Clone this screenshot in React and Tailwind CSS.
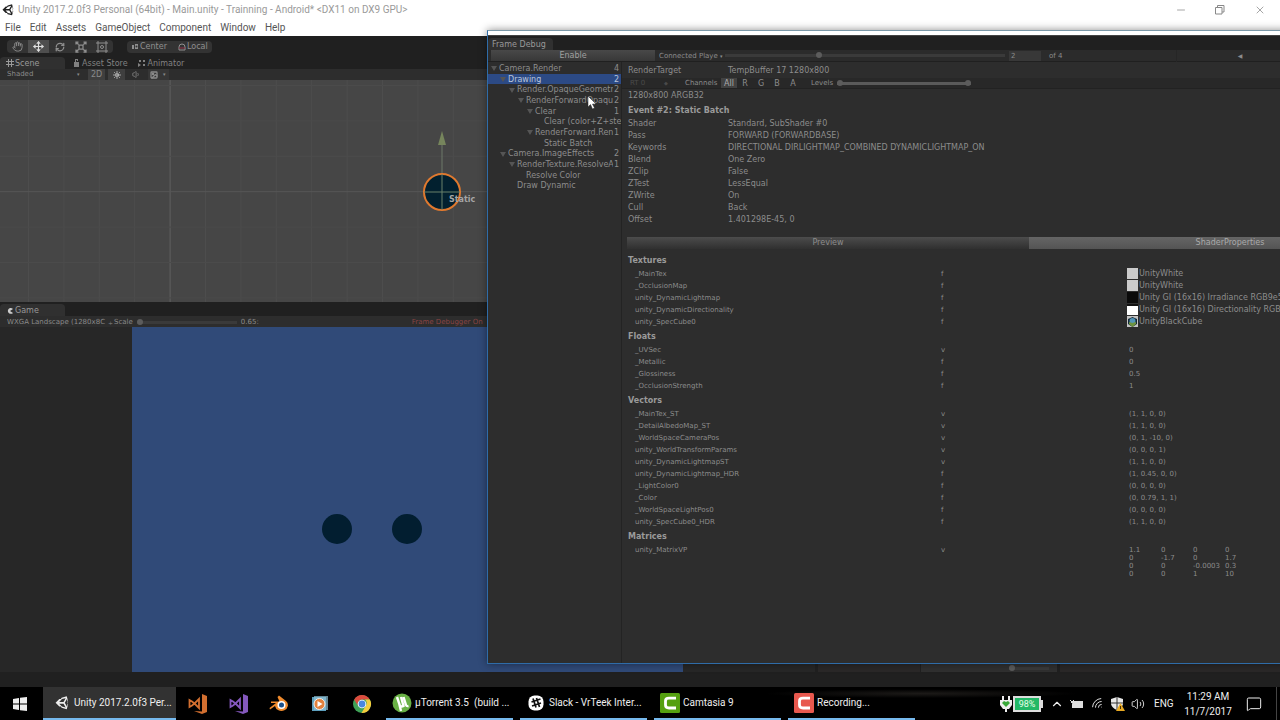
import { useState } from 'react';
import { Hand, Move, RefreshCw, Sun, Volume1, Volume2, Image, Minus, X, ChevronUp, Wifi, MessageSquare } from 'lucide-react';

const MENU = ['File', 'Edit', 'Assets', 'GameObject', 'Component', 'Window', 'Help'];

const TREE = [
  { name: 'Camera.Render', depth: 0, count: 4, open: true },
  { name: 'Drawing', depth: 1, count: 2, open: true },
  { name: 'Render.OpaqueGeometr', depth: 2, count: 2, open: true },
  { name: 'RenderForwardOpaqu', depth: 3, count: 2, open: true },
  { name: 'Clear', depth: 4, count: 1, open: true },
  { name: 'Clear (color+Z+ste', depth: 5 },
  { name: 'RenderForward.Ren', depth: 4, count: 1, open: true },
  { name: 'Static Batch', depth: 5 },
  { name: 'Camera.ImageEffects', depth: 1, count: 2, open: true },
  { name: 'RenderTexture.ResolveA', depth: 2, count: 1, open: true },
  { name: 'Resolve Color', depth: 3 },
  { name: 'Draw Dynamic', depth: 2 },
];

const STATE = [
  ['Shader', 'Standard, SubShader #0'],
  ['Pass', 'FORWARD (FORWARDBASE)'],
  ['Keywords', 'DIRECTIONAL DIRLIGHTMAP_COMBINED DYNAMICLIGHTMAP_ON'],
  ['Blend', 'One Zero'],
  ['ZClip', 'False'],
  ['ZTest', 'LessEqual'],
  ['ZWrite', 'On'],
  ['Cull', 'Back'],
  ['Offset', '1.401298E-45, 0'],
];

const TEXTURES = [
  ['_MainTex', 'f', 'UnityWhite', 'white'],
  ['_OcclusionMap', 'f', 'UnityWhite', 'white'],
  ['unity_DynamicLightmap', 'f', 'Unity GI (16x16) Irradiance RGB9e5', 'black'],
  ['unity_DynamicDirectionality', 'f', 'Unity GI (16x16) Directionality RGBM', 'half'],
  ['unity_SpecCube0', 'f', 'UnityBlackCube', 'cube'],
];

const FLOATS = [
  ['_UVSec', 'v', '0'],
  ['_Metallic', 'f', '0'],
  ['_Glossiness', 'f', '0.5'],
  ['_OcclusionStrength', 'f', '1'],
];

const VECTORS = [
  ['_MainTex_ST', 'v', '(1, 1, 0, 0)'],
  ['_DetailAlbedoMap_ST', 'v', '(1, 1, 0, 0)'],
  ['_WorldSpaceCameraPos', 'v', '(0, 1, -10, 0)'],
  ['unity_WorldTransformParams', 'v', '(0, 0, 0, 1)'],
  ['unity_DynamicLightmapST', 'v', '(1, 1, 0, 0)'],
  ['unity_DynamicLightmap_HDR', 'f', '(1, 0.45, 0, 0)'],
  ['_LightColor0', 'f', '(0, 0, 0, 0)'],
  ['_Color', 'f', '(0, 0.79, 1, 1)'],
  ['_WorldSpaceLightPos0', 'f', '(0, 0, 0, 0)'],
  ['unity_SpecCube0_HDR', 'f', '(1, 1, 0, 0)'],
];

const MATRIX = ['1.1', '0', '0', '0', '0', '-1.7', '0', '1.7', '0', '0', '-0.0003', '0.3', '0', '0', '1', '10'];

const RANGE = 'block appearance-none bg-transparent h-2 m-0 outline-none [&::-webkit-slider-runnable-track]:h-[3px] [&::-webkit-slider-runnable-track]:bg-[#3a3a3a] [&::-webkit-slider-thumb]:appearance-none [&::-webkit-slider-thumb]:size-[6px] [&::-webkit-slider-thumb]:-mt-[2px] [&::-webkit-slider-thumb]:rounded-full [&::-webkit-slider-thumb]:bg-[#5c5c5c]';

function UnityLogo({ className }) {
  return (
    <svg viewBox="0 0 24 24" className={className}>
      <path fill="currentColor" fillRule="evenodd" d="M22.5 9.2 20.1.6l-8.8 2.3-1.3 2.3H7.4L1 11.6 7.4 18H10l1.3 2.3 8.8 2.3 2.4-8.6-1.4-2.4zM11.9 5.3l6.4-1.6-3.7 6.4H7.2zM7.2 13.1h7.4l3.7 6.4-6.4-1.6zM16.8 11.6l3.7-6.4 1.7 6.4-1.7 6.4z" />
    </svg>
  );
}

function TitleBar() {
  return (
    <header className="h-5 pl-0.5 flex items-center bg-white text-[#9a9a9a] font-['Roboto',sans-serif]">
      <UnityLogo className="w-3 h-3 text-[#222]" />
      <h1 className="ml-1 text-[10px] leading-5 whitespace-nowrap">Unity 2017.2.0f3 Personal (64bit) - Main.unity - Trainning - Android* &lt;DX11 on DX9 GPU&gt;</h1>
      <div className="ml-auto flex text-[#888]">
        <button aria-label="Minimize" className="w-10 flex justify-center"><Minus className="w-3 h-3" strokeWidth={1.5} /></button>
        <button aria-label="Restore" className="w-[38px] flex justify-center">
          <svg viewBox="0 0 12 12" className="w-3 h-3" fill="none" stroke="currentColor"><path d="M1.5 3.5h6.5v6.5H1.5zM3.5 3.5v-2h6.500v6.500H8" /></svg>
        </button>
        <button aria-label="Close" className="w-[41px] flex justify-center"><X className="w-3 h-3" strokeWidth={1.5} /></button>
      </div>
    </header>
  );
}

function MenuBar() {
  return (
    <nav className="h-4 pl-[5px] flex items-center gap-[9px] bg-white text-[10px] leading-4 text-[#555] font-['Roboto',sans-serif]">
      {MENU.map((m) => <button key={m}>{m}</button>)}
    </nav>
  );
}

function Toolbar() {
  const tool = 'w-[21px] h-full flex items-center justify-center';
  return (
    <div className="h-[21px] pl-[7px] flex items-center gap-[14px] bg-[#202020] text-[#8f8f8f]">
      <div className="flex h-[13px] rounded-sm overflow-hidden bg-[#333]">
        <button aria-label="Hand" className={tool}><Hand className="w-[11px] h-[11px]" /></button>
        <button aria-label="Move" className={`${tool} bg-[#4e4e4e] text-[#ddd]`}><Move className="w-[11px] h-[11px]" strokeWidth={2.5} /></button>
        <button aria-label="Rotate" className={tool}><RefreshCw className="w-[10px] h-[10px]" strokeWidth={3} /></button>
        <button aria-label="Scale" className={tool}>
          <svg viewBox="0 0 24 24" className="w-3 h-3" fill="none" stroke="currentColor" strokeWidth="2.5"><path d="M8 8h8v8H8zM7 7 2 2M17 7l5-5M7 17l-5 5M17 17l5 5M2 7V2h5M17 2h5v5M2 17v5h5M17 22h5v-5" /></svg>
        </button>
        <button aria-label="Rect" className={`${tool} w-[22px]`}>
          <svg viewBox="0 0 24 24" className="w-3 h-3" fill="none" stroke="currentColor" strokeWidth="2"><path d="M4 4h16v16H4zM4 0v4H0M20 0v4h4M4 24v-4H0M20 24v-4h4" /><circle cx="12" cy="12" r="3" /></svg>
        </button>
      </div>
      <div className="flex h-3 rounded-sm overflow-hidden bg-[#333] text-[8px] leading-3">
        <button className="w-[43px] pl-1 flex items-center gap-[1px]">
          <svg viewBox="0 0 8 6" className="w-2 h-1.5" fill="currentColor"><path d="M1 1h2v4H1zM4 0h3v5H4z" /><circle cx="5.500" cy="2.500" r="1" fill="#333" /></svg>
          Center
        </button>
        <button className="w-[42px] pl-2 flex items-center gap-[1px]">
          <svg viewBox="0 0 8 8" className="w-2 h-2" fill="none"><path d="M1 4a3 3 0 0 1 6 0v3H1z" stroke="#8f8f8f" /><path d="M1 5h6" stroke="#963048" /></svg>
          Local
        </button>
      </div>
    </div>
  );
}

function SceneGrid() {
  const xs = Array.from({ length: 24 }, (_, i) => 28.5 + i * 35.4);
  const ys = Array.from({ length: 7 }, (_, i) => 5.5 + i * 35.4);
  return (
    <svg className="block w-full h-full bg-[#464646]" aria-label="Scene view">
      {xs.map((x, i) => <line key={x} x1={x} x2={x} y1="0" y2="100%" stroke={i === 4 ? '#606060' : '#4d4d4d'} />)}
      {ys.map((y, i) => <line key={y} x1="0" x2="100%" y1={y} y2={y} stroke={i === 3 ? '#575757' : '#4b4b4b'} />)}
      <path d="M442 64v48" stroke="#6c7868" />
      <path d="M442 51l4 14h-8z" fill="#76855c" />
      <circle cx="442" cy="112" r="18" fill="#02202f" stroke="#e0792e" strokeWidth="2" />
      <path d="M442 94v36M424 112h36" stroke="#68806a" />
      <text x="449" y="122" fontSize="8" fontWeight="bold" fill="#a5a5a5">Static</text>
    </svg>
  );
}

function ScenePanel() {
  return (
    <section className="flex flex-col h-[245px]">
      <div className="h-3 flex bg-[#202020] text-[8px] leading-[13px] text-[#808080]">
        <button className="w-[65px] pl-1.5 flex items-center gap-[1px] rounded-t-sm bg-[#303030] text-[#999]">
          <svg viewBox="0 0 8 8" className="w-2 h-2" stroke="currentColor"><path d="M2.500 0v8M5.500 0v8M0 2.500h8M0 5.500h8" /></svg>
          Scene
        </button>
        <button className="ml-2 flex items-center gap-[1px]">
          <svg viewBox="0 0 8 8" className="w-2 h-2" fill="currentColor"><path d="M1 3h5v5H1zM2 0h3v2H4V1H3v2H2z" /></svg>
          Asset Store
        </button>
        <button className="ml-[10px] flex items-center gap-0.5">
          <svg viewBox="0 0 8 8" className="w-2 h-2" fill="currentColor"><path d="M0 4l3 2-3 2zM1 1h2v2H1zM5 1h2v2H5zM5 5h2v2H5z" /></svg>
          Animator
        </button>
      </div>
      <div className="h-[11px] pl-[7px] flex items-center gap-[3px] bg-[#2d2d2d] text-[7px] leading-[11px] text-[#8a8a8a]">
        <select aria-label="Draw mode" className="w-[67px] appearance-none bg-transparent"><option>Shaded</option></select>
        <span className="w-2 text-[5px]">▾</span>
        <button className="w-[17px] bg-[#3f3f3f] text-[8px]">2D</button>
        <button aria-label="Lighting" className="w-[17px] h-full flex items-center justify-center bg-[#3f3f3f] text-[#ccc]"><Sun className="w-2 h-2" strokeWidth={3} /></button>
        <button aria-label="Audio" className="w-[17px] flex justify-center"><Volume1 className="w-[9px] h-[9px]" /></button>
        <button aria-label="Effects" className="w-[21px] h-full flex items-center gap-1 pl-[1px] bg-[#363636]"><Image className="w-2.5 h-2" strokeWidth={4} /><span className="text-[5px]">▾</span></button>
      </div>
      <div className="flex-1 min-h-0"><SceneGrid /></div>
    </section>
  );
}

function GamePanel() {
  return (
    <section className="flex flex-col flex-1">
      <div className="h-[14px] pt-0.5 flex bg-[#202020] text-[8px] leading-3 text-[#999]">
        <button className="w-[65px] pl-1.5 pt-[1px] flex items-center gap-[1px] rounded-t-sm bg-[#303030]">
          <svg viewBox="0 0 8 8" className="w-2 h-2" fill="#ccc"><path d="M4 1a3 3 0 1 0 3 5L4 4l3-2a3 3 0 0 0-3-1z" /></svg>
          Game
        </button>
      </div>
      <div className="h-[11px] pl-[7px] pt-[1px] flex items-center bg-[#2d2d2d] text-[7px] leading-[11px] text-[#8a8a8a]">
        <select aria-label="Aspect" className="w-[101px] appearance-none bg-transparent overflow-hidden text-clip"><option>WXGA Landscape (1280x8C</option></select>
        <span className="w-[6px] text-[6px]">÷</span>
        <label htmlFor="scale">Scale</label>
        <input id="scale" type="range" min="0" max="100" defaultValue="0" className={`w-[100px] ml-1 ${RANGE}`} />
        <span className="ml-1">0.65:</span>
        <span className="ml-[153px] text-[#8a4444]">Frame Debugger On</span>
      </div>
      <div className="flex-1 flex justify-center bg-[#272727]">
        <svg viewBox="0 0 551 345" className="w-[551px] h-full bg-[#304a78]" aria-label="Game view">
          <circle cx="205" cy="202" r="15" fill="#021e30" />
          <circle cx="275" cy="202" r="15" fill="#021e30" />
        </svg>
      </div>
    </section>
  );
}

function EventTree() {
  const [selected, setSelected] = useState(1);
  return (
    <div role="tree" className="w-[134px] shrink-0 pt-[1px] border-r border-[#232323]">
      <div className="h-32 flex flex-col text-[8px] leading-[11px] text-[#8c8c8c]">
        {TREE.map((n, i) => (
          <div key={i} role="treeitem" aria-selected={i === selected} onClick={() => setSelected(i)}
            className={`flex-1 min-h-0 flex items-center ${i === selected ? 'bg-[#2c4a85] text-[#b8c4dc]' : ''}`}
            style={{ paddingLeft: 3 + n.depth * 9 }}>
            <svg viewBox="0 0 6 6" className="w-1.5 h-1.5 mr-0.5 shrink-0" fill={n.open ? '#555' : 'none'}><path d="M0 1h6L3 6z" /></svg>
            <span className="flex-1 overflow-hidden whitespace-nowrap">{n.name}</span>
            {n.count && <span className="w-[6px] mr-0.5 shrink-0 text-right">{n.count}</span>}
          </div>
        ))}
      </div>
    </div>
  );
}

const SWATCH = {
  white: 'bg-[#cbcbcb]',
  black: 'bg-[#0a0a0a]',
  half: 'bg-white border-t-2 border-[#111]',
  cube: 'bg-[#c4c4c4]',
};

function Swatch({ kind }) {
  return (
    <span className={`w-[11px] h-[11px] shrink-0 ${SWATCH[kind]}`}>
      {kind === 'cube' && (
        <svg viewBox="0 0 11 11" className="block w-full h-full">
          <path d="M1 3l4.500-2L10 3v5l-4.500 3L1 8z" fill="#142a38" />
          <circle cx="5.500" cy="5" r="3" fill="#5295b8" />
          <path d="M2 6l3.500 1L9 6v2l-3.500 3L2 8z" fill="#6f9440" />
        </svg>
      )}
    </span>
  );
}

function PropTable({ title, rows }) {
  return (
    <section>
      <h3 className="h-4 pt-[3px] text-[8px] leading-3 font-bold text-[#9a9a9a]">{title}</h3>
      <table className="w-full table-fixed border-collapse text-[7px] leading-3">
        <tbody>
          {rows.map(([name, stage, value, swatch]) => (
            <tr key={name}>
              <td className="w-[313px] h-3 p-0 pl-[7px]">{name}</td>
              <td className="w-[186px] h-3 p-0">{stage}</td>
              <td className="h-3 p-0">
                {swatch
                  ? <span className="h-3 flex gap-[1px] text-[8px] whitespace-nowrap"><Swatch kind={swatch} />{value}</span>
                  : <span className="pl-0.5">{value}</span>}
              </td>
            </tr>
          ))}
        </tbody>
      </table>
    </section>
  );
}

function EventDetails() {
  const [tab, setTab] = useState('ShaderProperties');
  const [channel, setChannel] = useState('All');
  return (
    <div className="flex-1 min-w-0 text-[8px] leading-3 text-[#8c8c8c]">
      <div className="h-4 pl-1.5 pt-[3px] flex"><span className="w-[100px]">RenderTarget</span><span>TempBuffer 17 1280x800</span></div>
      <div className="h-[11px] pl-1 flex items-center bg-[#282828] border-b border-[#222] text-[7px] leading-[11px]">
        <select aria-label="Render target" disabled className="w-[38px] pl-1 appearance-none bg-transparent text-[#4a4a4a] opacity-100"><option>RT 0</option></select>
        <span className="w-[21px] text-[5px] text-[#4a4a4a]">◆</span>
        <span className="w-9">Channels</span>
        {['All', 'R', 'G', 'B', 'A'].map((c) => (
          <button key={c} onClick={() => setChannel(c)} className={`w-4 h-full text-[8px] ${c === channel ? 'bg-[#424242] text-[#aaa]' : ''}`}>{c}</button>
        ))}
        <span className="ml-[10px] mr-1">Levels</span>
        <div className="grid w-[134px]">
          <input type="range" aria-label="Black level" min="0" max="100" defaultValue="0" className={`col-start-1 row-start-1 w-full ${RANGE} [&::-webkit-slider-runnable-track]:bg-[#5a5a5a]`} />
          <input type="range" aria-label="White level" min="0" max="100" defaultValue="100" className={`col-start-1 row-start-1 w-full ${RANGE} [&::-webkit-slider-runnable-track]:bg-transparent`} />
        </div>
      </div>
      <p className="pl-1.5 pt-[1px]">1280x800 ARGB32</p>
      <h2 className="pl-1.5 mt-[3px] h-[13px] font-bold text-[#9a9a9a]">Event #2: Static Batch</h2>
      <dl className="pl-1.5">
        {STATE.map(([k, v]) => (
          <div key={k} className="flex h-3"><dt className="w-[100px]">{k}</dt><dd>{v}</dd></div>
        ))}
      </dl>
      <div className="mt-[11px] ml-[5px] flex leading-3">
        {['Preview', 'ShaderProperties'].map((t) => (
          <button key={t} onClick={() => setTab(t)}
            className={`flex-1 h-3 bg-linear-to-b ${t === tab ? 'from-[#656565] to-[#545454] text-[#aaa]' : 'from-[#4c4c4c] to-[#303030]'}`}>{t}</button>
        ))}
      </div>
      <div className="pl-1.5 pt-[3px]">
        <PropTable title="Textures" rows={TEXTURES} />
        <PropTable title="Floats" rows={FLOATS} />
        <PropTable title="Vectors" rows={VECTORS} />
        <section>
          <h3 className="h-4 pt-[3px] font-bold text-[#9a9a9a]">Matrices</h3>
          <div className="flex pl-[7px] text-[7px]">
            <span className="w-[306px]">unity_MatrixVP</span>
            <span className="w-[188px]">v</span>
            <div className="grid grid-cols-[32px_32px_32px_32px] pt-0.5 leading-[8px]">
              {MATRIX.map((m, i) => <span key={i} className="whitespace-nowrap">{m}</span>)}
            </div>
          </div>
        </section>
      </div>
    </div>
  );
}

function FrameDebugger() {
  return (
    <div className="absolute left-[487px] top-[30px] bottom-14 w-[945px] flex flex-col bg-[#2d2d2d] border border-[#2f6ca8] border-t-[#7a98a8] shadow-[0_0_8px_rgba(0,0,0,0.45)]">
      <div className="h-1 bg-white" />
      <div className="h-[15px] pt-0.5 flex border-t border-[#444] bg-[#202020] text-[8px] leading-[14px] text-[#999]">
        <button className="w-[65px] pl-1 text-left rounded-t-sm bg-[#303030]">Frame Debug</button>
      </div>
      <div className="h-3 pl-[3px] flex items-center bg-[#2b2b2b] border-b border-[#202020] text-[7px] leading-3 text-[#8c8c8c]">
        <button className="w-[164px] h-full bg-linear-to-b from-[#484848] to-[#383838] text-[8px] leading-3 text-[#a0a0a0]">Enable</button>
        <select aria-label="Connected player" className="w-[65px] pl-1 appearance-none bg-transparent text-clip"><option>Connected Playe</option></select>
        <span className="w-[5px] text-[5px]">▾</span>
        <input type="range" aria-label="Event" min="1" max="4" defaultValue="2" className={`w-[280px] mr-1 ${RANGE}`} />
        <input aria-label="Event number" defaultValue="2" className="w-8 h-[10px] pl-0.5 bg-[#383838]" />
        <span className="w-[136px] pl-2 border-r border-[#262626]">of 4</span>
        <button aria-label="Previous event" className="w-[126px] text-[6px]">◀</button>
        <button aria-label="Next event" className="w-[126px] text-[6px]">▶</button>
      </div>
      <div className="flex-1 min-h-0 flex">
        <EventTree />
        <EventDetails />
      </div>
    </div>
  );
}

function VisualStudio({ color }) {
  return (
    <svg viewBox="0 0 20 20" className="w-5 h-5">
      <path d="M14 0l5 2v16l-5 2-8-3 8 0.500z" fill={color} />
      <path d="M1.500 6v7L4 11.500l2.500-2L11 14V5L6.500 9.500 4 7.500z" fill="none" stroke={color} strokeWidth="1.800" />
    </svg>
  );
}

function Blender() {
  return (
    <svg viewBox="0 0 20 20" className="w-5 h-5">
      <path d="M10 1.500l7 5.500a6.500 5.800 0 1 1-11 5L1 15.500l-.5-1.500L7 9H2V7.500h8.500L8.500 3z" fill="#ef8a2c" />
      <circle cx="12.500" cy="11" r="4" fill="#fff" />
      <circle cx="12.500" cy="11" r="2.500" fill="#1c5089" />
    </svg>
  );
}

function MediaPlayer() {
  return (
    <svg viewBox="0 0 20 20" className="w-5 h-5">
      <path d="M2 3h14v14H2z" fill="#5d9fbd" />
      <path d="M4 2h14v14H4z" fill="#8fc0d4" opacity=".7" />
      <circle cx="9.500" cy="10" r="5.500" fill="#e2813c" stroke="#eee" />
      <path d="M7.500 7v6l5-3z" fill="#fff" />
    </svg>
  );
}

function Chrome() {
  return (
    <svg viewBox="0 0 20 20" className="w-5 h-5">
      <circle cx="10" cy="10" r="9" fill="#3fa257" />
      <path d="M2.200 5.500A9 9 0 0 1 17.800 5.500H10a4.500 4.500 0 0 0-4 6.500z" fill="#dc4b3e" />
      <path d="M17.800 5.500A9 9 0 0 1 9.500 19l4.300-7.200a4.500 4.500 0 0 0-.8-6.300z" fill="#f5cc3d" />
      <circle cx="10" cy="10" r="4.300" fill="#fff" />
      <circle cx="10" cy="10" r="3.400" fill="#4a86e0" />
    </svg>
  );
}

function UTorrent() {
  return (
    <svg viewBox="0 0 20 20" className="w-5 h-5">
      <circle cx="10" cy="10" r="9.500" fill="#69b045" />
      <path d="M5 4l2.500 7.500q1.200 3 4 1.500L9 4M11.500 4l2.500 8q.5 1.500 2.500 1M7.500 12l1.500 6" fill="none" stroke="#fff" strokeWidth="2.400" />
    </svg>
  );
}

function Slack() {
  return (
    <svg viewBox="0 0 20 20" className="w-5 h-5">
      <rect x="2.500" y="2.500" width="15" height="15" rx="6" fill="#fff" />
      <path d="M7 5.500l3 9M10.500 5l3 9M5.500 9l9-3M6 13l9-3" stroke="#111" strokeWidth="1.700" />
    </svg>
  );
}

function Camtasia({ color }) {
  return (
    <svg viewBox="0 0 20 20" className="w-5 h-5">
      <rect width="20" height="20" rx="1.500" fill={color} />
      <path d="M16 5.200H9Q5.500 5.200 5.500 8v4q0 3 3.500 3h7" fill="none" stroke="#fff" strokeWidth="2.800" />
    </svg>
  );
}

const APPS = [
  { name: 'µTorrent 3.5  (build ...', icon: <UTorrent /> },
  { name: 'Slack - VrTeek Inter...', icon: <Slack /> },
  { name: 'Camtasia 9', icon: <Camtasia color="#55a010" /> },
  { name: 'Recording...', icon: <Camtasia color="#e8584e" /> },
];

function Tray() {
  return (
    <div className="ml-auto pr-[3px] flex items-center">
      <svg viewBox="0 0 12 16" className="w-3 h-4"><path d="M3 0v4M9 0v4M6 12v4" stroke="#eee" strokeWidth="2" /><path d="M0 4h12v5l-3 4H3L0 9z" fill="#eee" /><path d="M6 11L2 7l2-2 2 1 2-1 2 2z" fill="#38a838" /></svg>
      <span className="w-[28px] h-4 ml-[1px] border-2 border-[#ddd] bg-[#22b866] text-center text-[9px] leading-3 text-[#e8ffe8]">98%</span>
      <span className="w-0.5 h-2 bg-[#ddd]" />
      <button aria-label="Show hidden icons" className="ml-1.5 w-4 flex justify-center"><ChevronUp className="w-3.5 h-3.5" strokeWidth={2} /></button>
      <svg viewBox="0 0 14 10" className="ml-[5px] w-3.5 h-2.5"><path d="M3 2h10v7H2V5z" fill="#ddd" /><path d="M0 1l4 4M1 4l3-3" stroke="#ddd" /></svg>
      <Wifi className="ml-[7px] w-3.5 h-3.5 -rotate-45" strokeWidth={1.5} />
      <svg viewBox="0 0 14 14" className="ml-[6px] w-3.5 h-3.5"><path d="M6 0l6 2v5q-1 4-6 6Q1 11 0 7V2z" fill="#e8e8e8" /><path d="M6 0v13M0 6h12" stroke="#333" /><path d="M9.500 6l4.500 8H5z" fill="#e8a922" /><path d="M9.500 9v3" stroke="#442f08" /></svg>
      <Volume2 className="ml-[6px] w-3.5 h-3.5" strokeWidth={1.5} />
      <span className="ml-[9px] w-5 text-[10px]">ENG</span>
      <div className="ml-[10px] w-12 text-center text-[10px] leading-[15px]"><time className="block">11:29 AM</time><time className="block">11/7/2017</time></div>
      <button aria-label="Notifications" className="ml-[12px] w-5 flex justify-center"><MessageSquare className="w-4 h-4" strokeWidth={1.5} /></button>
      <span className="ml-3 h-[33px] border-l border-[#444]" />
    </div>
  );
}

function Taskbar() {
  const slot = 'h-full flex items-center justify-center';
  return (
    <footer className="h-[33px] flex items-center bg-black text-[#eee] text-[10px] whitespace-nowrap font-['Roboto',sans-serif] bg-[radial-gradient(ellipse_at_72%_20%,#1c1a18,transparent_12%)]">
      <button aria-label="Start" className={`${slot} w-10`}>
        <svg viewBox="0 0 14 14" className="w-3.5 h-3.5" fill="#eee"><path d="M0 2l6-1v5.500H0zM7 .8L14 0v6.500H7zM0 7.500h6V13l-6-1zM7 7.500h7V14l-7-.8z" /></svg>
      </button>
      <button className="ml-[3px] w-[133px] h-full pl-3 flex items-center bg-[#323232] border-b-2 border-[#76b9ed]">
        <UnityLogo className="w-3.5 h-3.5" />
        <span className="ml-[5px]">Unity 2017.2.0f3 Per...</span>
      </button>
      <button aria-label="Visual Studio Code" className={`${slot} w-[43px]`}><VisualStudio color="#d26f30" /></button>
      <button aria-label="Visual Studio" className={`${slot} w-[40px]`}><VisualStudio color="#8458bd" /></button>
      <button aria-label="Blender" className={`${slot} w-[40px]`}><Blender /></button>
      <button aria-label="Media Player" className={`${slot} w-[41px]`}><MediaPlayer /></button>
      <button aria-label="Chrome" className={`${slot} w-[44px]`}><Chrome /></button>
      <div className="ml-0.5 h-full flex gap-[7px]">
        {APPS.map((a) => (
          <button key={a.name} className="w-[127px] h-full pl-[6px] flex items-center border-b-2 border-[#76b9ed]">
            {a.icon}<span className="ml-[3px] whitespace-pre">{a.name}</span>
          </button>
        ))}
      </div>
      <Tray />
    </footer>
  );
}

export default function App() {
  return (
    <div className="relative min-h-screen flex flex-col overflow-hidden bg-[#202020] font-['DejaVu_Sans',sans-serif]">
      <TitleBar />
      <MenuBar />
      <main className="flex-1 flex flex-col">
        <Toolbar />
        <div className="flex-1 flex">
          <div className="w-[815px] shrink-0 flex flex-col"><ScenePanel /><GamePanel /></div>
          <div className="w-[102px] ml-[3px] bg-[#2a2828]" />
          <div className="w-[136px] ml-[1px] flex items-end justify-end bg-[#303030]">
            <input type="range" aria-label="Icon size" min="0" max="100" defaultValue="0" className={`w-10 mr-2 ${RANGE}`} />
          </div>
          <div className="flex-1 ml-[3px] bg-[#2a2828]" />
        </div>
        <div className="h-[15px]" />
      </main>
      <FrameDebugger />
      <svg viewBox="0 0 10 14" className="absolute left-[587px] top-[96px] w-2.5 h-3.5"><path d="M1 0v11l2.500-2.500L5.500 13l2-1-2-4H9z" fill="#fff" stroke="#222" strokeWidth=".5" /></svg>
      <Taskbar />
    </div>
  );
}
